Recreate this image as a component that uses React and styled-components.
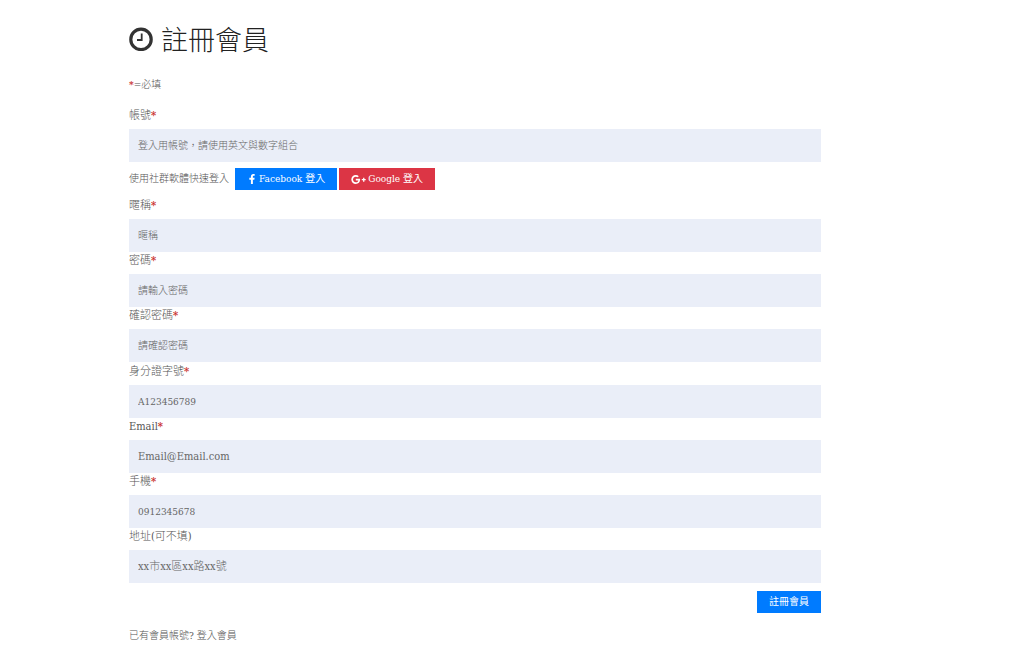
import React from 'react';
import styled, { createGlobalStyle } from 'styled-components';
import { FaFacebookF, FaGooglePlusG } from 'react-icons/fa';

const GlobalStyle = createGlobalStyle`
  *, *::before, *::after {
    box-sizing: border-box;
  }

  body {
    margin: 0;
    background: #fff;
    color: #555;
    font-family: "DejaVu Serif Condensed", "DejaVu Serif", "Noto Sans CJK TC", serif;
    font-stretch: condensed;
    font-size: 11px;
    font-weight: 300;
    line-height: 22px;
  }
`;

const Page = styled.main`
  padding: 19px 203px 0 129px;
`;

const Title = styled.h1`
  display: flex;
  align-items: center;
  gap: 8px;
  margin: 0 0 16px;
  color: #222;
  font-family: "Noto Sans CJK TC", sans-serif;
  font-size: 27px;
  font-weight: 300;
  line-height: 40px;
`;

const Note = styled.p`
  margin: 0;
  font-size: 10px;
  line-height: 20px;
`;

const Star = styled.span`
  color: #c9302c;
  font-weight: 700;
`;

const Form = styled.form`
  display: flex;
  flex-direction: column;
  padding-top: 12px;
`;

const Group = styled.div`
  display: flex;
  flex-direction: column;
  margin-bottom: 1px;
`;

const Label = styled.label`
  height: 22px;
  line-height: 18px;
`;

const Input = styled.input`
  width: 100%;
  height: 33px;
  padding: 0 9px;
  border: 0;
  border-radius: 0;
  background: #eaeef8;
  color: #555;
  font-family: inherit;
  font-stretch: inherit;
  font-weight: inherit;
  font-size: ${({ $latin }) => ($latin ? '11px' : '10px')};

  &::placeholder {
    color: #666;
    opacity: 1;
  }
`;

const Social = styled.div`
  display: flex;
  align-items: center;
  gap: 2px;
  padding: 6px 0 7px;
  font-size: 10px;
`;

const SocialText = styled.span`
  padding-right: 4px;
`;

const Button = styled.button`
  display: inline-flex;
  align-items: center;
  justify-content: center;
  gap: 2px;
  height: 22px;
  padding: 0 12px;
  border: 0;
  background: ${({ $color }) => $color || '#007bff'};
  color: #fff;
  font-family: inherit;
  font-stretch: inherit;
  font-size: 10px;
  font-weight: 400;
  line-height: 22px;
  white-space: nowrap;
  cursor: pointer;
`;

const Actions = styled.div`
  display: flex;
  justify-content: flex-end;
  padding-top: 7px;
`;

const Footer = styled.p`
  margin: 12px 0 0;
  font-size: 10px;

  a {
    color: inherit;
    text-decoration: none;
  }
`;

function ClockIcon() {
    return (
        <svg width="24" height="24" viewBox="0 0 24 24" fill="none" stroke="#333" aria-hidden="true">
            <circle cx="12" cy="12.4" r="10.2" strokeWidth="3.2" />
            <path d="M12.7 6.4V13H8" strokeWidth="1.8" />
        </svg>
    );
}

function Field({ id, label, required, ...rest }) {
    return (
        <>
            <Label htmlFor={id}>{ label }{ required && <Star>*</Star> }</Label>
            <Input id={id} name={id} {...rest} />
        </>
    );
}

export default function App() {
    return (
        <>
            <GlobalStyle />
            <Page>
                <Title><ClockIcon />註冊會員</Title>
                <Note><Star>*</Star>=必填</Note>
                <Form onSubmit={(e) => e.preventDefault()}>
                    <Field id="account" label="帳號" required placeholder="登入用帳號，請使用英文與數字組合" />
                    <Social>
                        <SocialText>使用社群軟體快速登入</SocialText>
                        <Button type="button"><FaFacebookF size={10} />Facebook 登入</Button>
                        <Button type="button" $color="#dc3545"><FaGooglePlusG size={15} />Google 登入</Button>
                    </Social>
                    <Group>
                        <Field id="nickname" label="暱稱" required placeholder="暱稱" />
                        <Field id="password" label="密碼" required type="password" placeholder="請輸入密碼" />
                        <Field id="confirm" label="確認密碼" required type="password" placeholder="請確認密碼" />
                    </Group>
                    <Group>
                        <Field id="identity" label="身分證字號" required placeholder="A123456789" />
                        <Field id="email" label="Email" required type="email" $latin placeholder="Email@Email.com" />
                        <Field id="phone" label="手機" required type="tel" placeholder="0912345678" />
                        <Field id="address" label="地址(可不填)" $latin placeholder="xx市xx區xx路xx號" />
                    </Group>
                    <Actions>
                        <Button type="submit">註冊會員</Button>
                    </Actions>
                </Form>
                <Footer>已有會員帳號? <a href="#login">登入會員</a></Footer>
            </Page>
        </>
    );
}
